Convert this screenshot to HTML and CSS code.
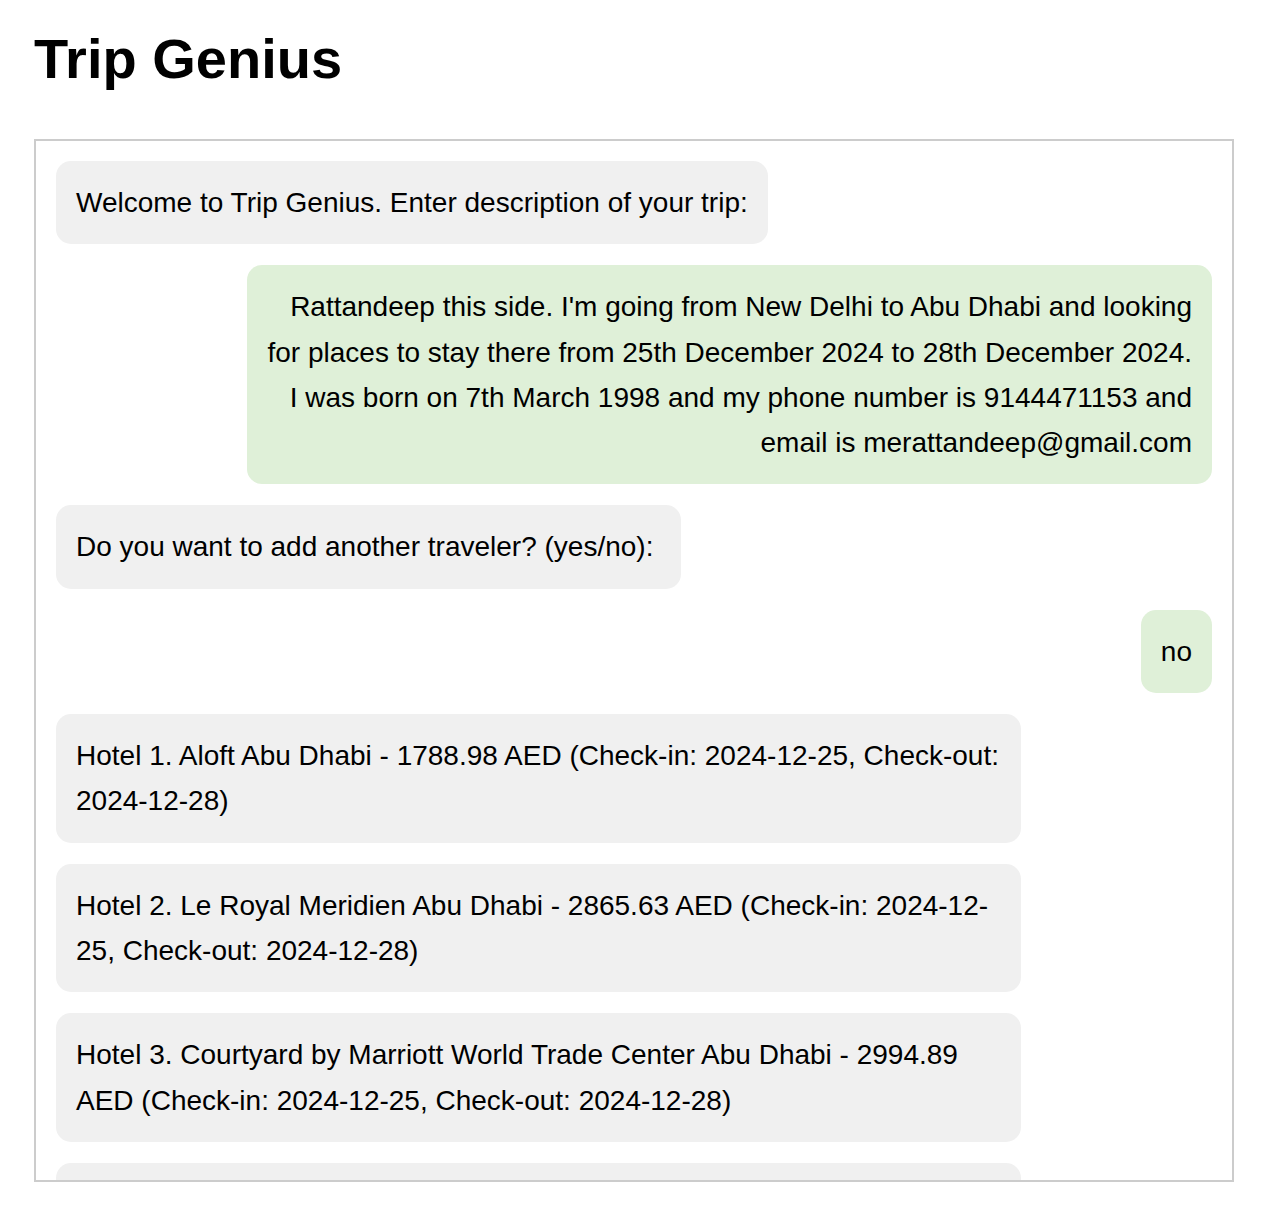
FILE: index.html
```html
<!DOCTYPE html>
<html lang="en">
<head>
<meta charset="utf-8">
<title>Trip Genius</title>
<link rel="stylesheet" href="styles.css">
</head>
<body>
<div class="page">
  <h1 class="title">Trip Genius</h1>
  <div class="chat">
    <div class="msg bot">Welcome to Trip Genius. Enter description of your trip:</div>
    <div class="msg user">Rattandeep this side. I'm going from New Delhi to Abu Dhabi and looking for places to stay there from 25th December 2024 to 28th December 2024. I was born on 7th March 1998 and my phone number is 9144471153 and email is merattandeep@gmail.com</div>
    <div class="msg bot">Do you want to add another traveler? (yes/no):&nbsp;</div>
    <div class="msg user">no</div>
    <div class="msg bot">Hotel 1. Aloft Abu Dhabi - 1788.98 AED (Check-in: 2024-12-25, Check-out: 2024-12-28)</div>
    <div class="msg bot">Hotel 2. Le Royal Meridien Abu Dhabi - 2865.63 AED (Check-in: 2024-12-25, Check-out: 2024-12-28)</div>
    <div class="msg bot">Hotel 3. Courtyard by Marriott World Trade Center Abu Dhabi - 2994.89 AED (Check-in: 2024-12-25, Check-out: 2024-12-28)</div>
    <div class="msg bot">Hotel 4. Southern Sun Abu Dhabi - 3120.45 AED (Check-in: 2024-12-25, Check-out: 2024-12-28)</div>
  </div>
</div>
</body>
</html>
```

FILE: styles.css
```css
html, body {
  margin: 0;
  padding: 0;
  background: #ffffff;
}

body {
  font-family: "Liberation Sans", Arial, sans-serif;
  color: #000000;
}

.page {
  padding: 27px 34px;
}

.title {
  margin: 0 0 49px 0;
  font-size: 56px;
  line-height: 63px;
  font-weight: bold;
}

.chat {
  box-sizing: border-box;
  width: 1200px;
  height: 1043px;
  border: 2px solid #cccccc;
  padding: 20px;
  overflow: hidden;
  display: flex;
  flex-direction: column;
  gap: 21px;
}

.msg {
  flex: none;
  max-width: 80%;
  padding: 19px 20px;
  border-radius: 15px;
  font-size: 28px;
  line-height: 45.3px;
}

.bot {
  align-self: flex-start;
  background: #f0f0f0;
  text-align: left;
}

.user {
  align-self: flex-end;
  background: #dff0d8;
  text-align: right;
}
```
